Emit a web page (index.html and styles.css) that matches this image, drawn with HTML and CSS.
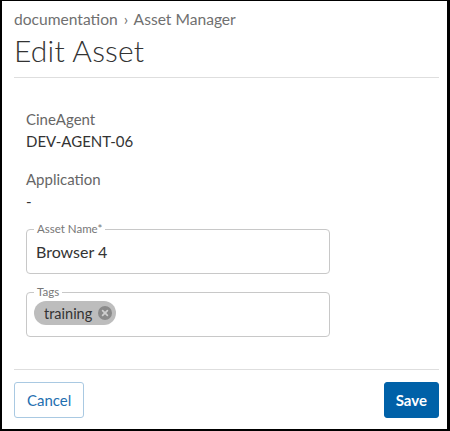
FILE: index.html
```html
<!DOCTYPE html>
<html>
<head>
<meta charset="utf-8">
<link rel="stylesheet" href="styles.css">
</head>
<body>
<div class="frame">
  <header class="header">
    <div class="crumbs">documentation <span class="sep">›</span> Asset Manager</div>
    <h1 class="title">Edit Asset</h1>
  </header>
  <main class="body">
    <div class="infos">
      <div class="info">
        <div class="info-label">CineAgent</div>
        <div class="info-value">DEV-AGENT-06</div>
      </div>
      <div class="info">
        <div class="info-label">Application</div>
        <div class="info-value">-</div>
      </div>
    </div>
    <fieldset class="field">
      <legend class="legend">Asset Name*</legend>
      <div class="field-value">Browser 4</div>
    </fieldset>
    <fieldset class="field field-tags">
      <legend class="legend">Tags</legend>
      <span class="chip">training<span class="chip-x"><svg width="14" height="14" viewBox="0 0 14 14"><circle cx="7" cy="7" r="7" fill="#8a8a8a"/><path d="M4.6 4.6l4.8 4.8M9.4 4.6l-4.8 4.8" stroke="#cfcfcf" stroke-width="1.7" stroke-linecap="round"/></svg></span></span>
    </fieldset>
  </main>
  <footer class="footer">
    <button class="btn btn-cancel">Cancel</button>
    <button class="btn btn-save">Save</button>
  </footer>
</div>
</body>
</html>
```
FILE: styles.css
```css
html, body {
  margin: 0;
  padding: 0;
  background: #fff;
}
.frame {
  box-sizing: border-box;
  width: 450px;
  height: 431px;
  border-style: solid;
  border-color: #000;
  border-width: 1px 3px 2px 2px;
  font-family: "Lato", "Liberation Sans", sans-serif;
  color: #333;
  display: flex;
  flex-direction: column;
}
.header {
  margin: 0 8px 0 12px;
  padding-top: 9px;
  border-bottom: 1px solid #dedede;
  height: 77px;
  box-sizing: border-box;
  flex-shrink: 0;
}
.crumbs {
  font-size: 15.6px;
  color: #707070;
  line-height: 18px;
}
.sep {
  margin: 0 2px;
}
.title {
  margin: 5px 0 0;
  font-size: 30px;
  font-weight: 300;
  line-height: 34px;
  letter-spacing: 0.2px;
  color: #333;
}
.body {
  flex: 1;
  padding: 32px 0 0 24px;
}
.infos {
  display: flex;
  flex-direction: column;
  gap: 20px;
  margin-bottom: 14px;
}
.info-label {
  font-size: 15px;
  color: #666;
  line-height: 18px;
  margin-bottom: 4px;
}
.info-value {
  font-size: 15px;
  color: #333;
  line-height: 18px;
}
.field {
  width: 304px;
  box-sizing: border-box;
  margin: 0 0 13px;
  padding: 0 8px 0 7px;
  border: 1px solid #c8c8c8;
  border-radius: 4px;
  height: 50px;
}
.legend {
  font-size: 11.5px;
  color: #777;
  padding: 0 3px;
  margin-left: 0;
  line-height: 10px;
}
.field-value {
  font-size: 16px;
  color: #333;
  line-height: 18px;
  padding: 9px 0 0 2px;
}
.chip {
  display: inline-flex;
  align-items: center;
  gap: 6px;
  background: #bdbdbd;
  border-radius: 12px;
  height: 24px;
  padding: 0 4px 0 10px;
  font-size: 14.5px;
  color: #333;
  margin-top: 4px;
}
.chip-x {
  display: inline-flex;
}
.footer {
  margin: 0 8px 0 12px;
  border-top: 1px solid #dedede;
  height: 60px;
  box-sizing: border-box;
  display: flex;
  justify-content: space-between;
  align-items: flex-start;
  padding-top: 12px;
  flex-shrink: 0;
}
.btn {
  font-family: "Lato", "Liberation Sans", sans-serif;
  font-size: 15px;
  height: 36px;
  border-radius: 3px;
  padding: 0 12px;
  cursor: pointer;
}
.btn-cancel {
  background: #fff;
  color: #1f6fb0;
  border: 1px solid #a9c9e2;
}
.btn-save {
  background: #0061a8;
  color: #fff;
  border: 1px solid #0061a8;
  font-weight: 700;
  padding: 0 11px;
}
```
